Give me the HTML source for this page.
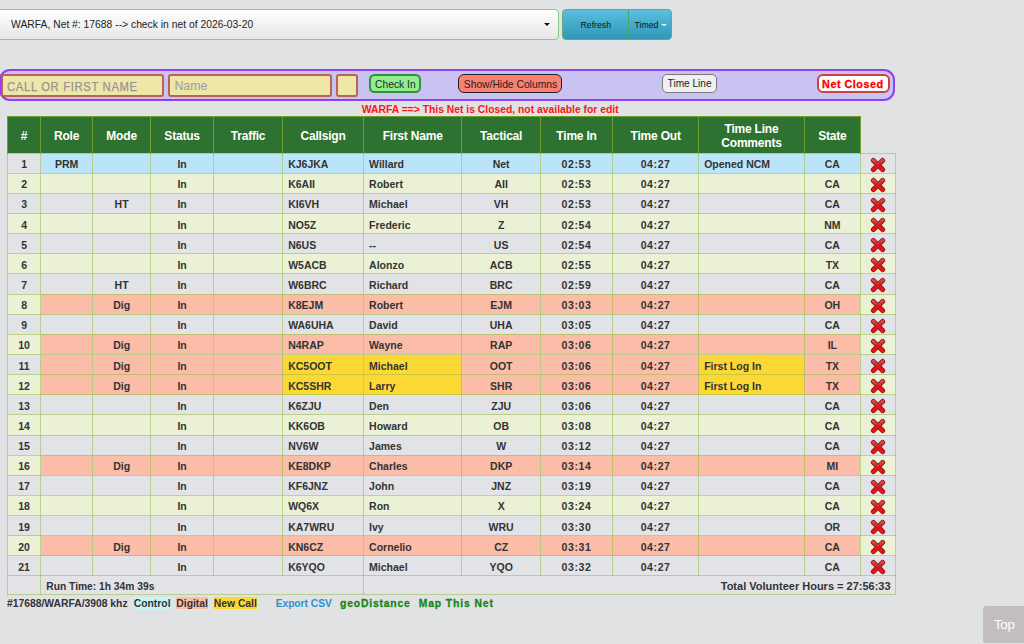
<!DOCTYPE html>
<html><head><meta charset="utf-8"><title>NCM</title>
<style>
html,body{margin:0;padding:0;}
body{width:1024px;height:644px;overflow:hidden;background:#e1e2e4;position:relative;font-family:"Liberation Sans",sans-serif;}
.a{position:absolute;box-sizing:border-box;}
.t{position:absolute;white-space:nowrap;}
.cell{position:absolute;box-sizing:border-box;display:flex;align-items:center;overflow:hidden;white-space:nowrap;font-weight:bold;font-size:10.5px;color:#333333;}
.cell.c{justify-content:center;}
.cell{padding-top:1.9px;}
.tm{letter-spacing:0.6px;}
.cell.l{justify-content:flex-start;padding-left:5.6px;}
.hd{position:absolute;box-sizing:border-box;display:flex;align-items:center;justify-content:center;text-align:center;color:#fff;font-weight:bold;font-size:12px;letter-spacing:-0.2px;line-height:14px;padding-top:2px;}
</style></head><body>
<svg width="0" height="0" style="position:absolute"><defs><linearGradient id="xg" x1="0" y1="0" x2="0" y2="1" gradientUnits="objectBoundingBox"><stop offset="0" stop-color="#d44a4a"/><stop offset="0.5" stop-color="#d01a1a"/><stop offset="1" stop-color="#f51010"/></linearGradient></defs></svg>

<div class="a" style="left:-8px;top:9.4px;width:566.5px;height:30.4px;border:1px solid #8fc98f;border-radius:4px;background:linear-gradient(#ffffff,#e6e6e6);"></div>
<div class="t" style="left:11.1px;top:18.8px;font-size:10.33px;color:#222;">WARFA, Net #: 17688 --&gt; check in net of 2026-03-20</div>
<div class="a" style="left:544px;top:22.8px;width:0;height:0;border-left:3px solid transparent;border-right:3px solid transparent;border-top:3.2px solid #111;"></div>
<div class="a" style="left:562px;top:9.4px;width:110.3px;height:30.2px;border:1px solid #5fae7a;border-radius:4px;background:linear-gradient(#5bbfdf,#2f97b7);"></div>
<div class="a" style="left:628px;top:9.8px;width:1px;height:29.4px;background:#4aa56e;"></div>
<div class="t" style="left:580.6px;top:19.8px;font-size:8.7px;color:#0c1418;">Refresh</div>
<div class="t" style="left:634.6px;top:19.8px;font-size:8.7px;color:#0c1418;">Timed</div>
<div class="a" style="left:661px;top:23.6px;width:0;height:0;border-left:3px solid transparent;border-right:3px solid transparent;border-top:2.6px solid #fff;"></div>
<div class="a" style="left:-1.5px;top:69px;width:896.5px;height:32.3px;border:2px solid #9040f0;border-radius:11px;background:#c9c3f3;"></div>
<div class="a" style="left:0.8px;top:74.2px;width:163.7px;height:22.9px;border:2px solid #bd6152;border-radius:3px;background:#efe7a8;"></div>
<div class="t" style="left:7.4px;top:79.3px;font-size:12.8px;letter-spacing:0.75px;transform:scaleX(0.88);transform-origin:0 0;-webkit-text-stroke:0.25px #949494;color:#949494;">CALL OR FIRST NAME</div>
<div class="a" style="left:168.3px;top:74.4px;width:163.6px;height:22.9px;border:2px solid #bd6152;border-radius:3px;background:#efe7a8;"></div>
<div class="t" style="left:174.4px;top:78.6px;font-size:12.4px;color:#9c9c9c;">Name</div>
<div class="a" style="left:335.7px;top:74.4px;width:22px;height:22.9px;border:2px solid #bd6152;border-radius:3px;background:#efe7a8;"></div>
<div class="a" style="left:369px;top:74.1px;width:51.7px;height:18.6px;border:2px solid #33913a;border-radius:5.5px;background:#90ee90;"></div>
<div class="t" style="left:375px;top:78.6px;font-size:10.32px;color:#1e2a1e;">Check In</div>
<div class="a" style="left:458.2px;top:74.3px;width:103.8px;height:18.6px;border:1.3px solid #222;border-radius:6px;background:#fa8072;"></div>
<div class="t" style="left:463.8px;top:78.8px;font-size:10.3px;color:#222;">Show/Hide Columns</div>
<div class="a" style="left:662.2px;top:74.2px;width:54.7px;height:18.4px;border:1.2px solid #7a7a7a;border-radius:5px;background:#f0f0f0;"></div>
<div class="t" style="left:667.6px;top:78.1px;font-size:10.1px;color:#222;">Time Line</div>
<div class="a" style="left:816.5px;top:74.1px;width:73.3px;height:18.6px;border:2px solid #d04040;border-radius:6px;background:#fff;"></div>
<div class="t" style="left:822.1px;top:78.1px;font-size:10.8px;letter-spacing:0.5px;-webkit-text-stroke:0.3px #ff0000;font-weight:bold;color:#ff0000;">Net Closed</div>
<div class="t" style="left:361.8px;top:103.9px;font-size:10.35px;font-weight:bold;color:#ff1414;">WARFA ==&gt; This Net is Closed, not available for edit</div>
<div class="a" style="left:7.5px;top:116.0px;width:852.80px;height:37.20px;background:#2e7231;"></div>
<div class="hd" style="left:7.5px;top:116.0px;width:33.20px;height:37.20px;">#</div>
<div class="hd" style="left:40.7px;top:116.0px;width:51.80px;height:37.20px;">Role</div>
<div class="hd" style="left:92.5px;top:116.0px;width:58.20px;height:37.20px;">Mode</div>
<div class="hd" style="left:150.7px;top:116.0px;width:62.80px;height:37.20px;">Status</div>
<div class="hd" style="left:213.5px;top:116.0px;width:69.10px;height:37.20px;">Traffic</div>
<div class="hd" style="left:282.6px;top:116.0px;width:80.90px;height:37.20px;">Callsign</div>
<div class="hd" style="left:363.5px;top:116.0px;width:98.30px;height:37.20px;">First Name</div>
<div class="hd" style="left:461.8px;top:116.0px;width:78.70px;height:37.20px;">Tactical</div>
<div class="hd" style="left:540.5px;top:116.0px;width:72.10px;height:37.20px;">Time In</div>
<div class="hd" style="left:612.6px;top:116.0px;width:86.00px;height:37.20px;">Time Out</div>
<div class="hd" style="left:698.6px;top:116.0px;width:105.80px;height:37.20px;">Time Line<br>Comments</div>
<div class="hd" style="left:804.4px;top:116.0px;width:55.90px;height:37.20px;">State</div>
<div class="cell c" style="left:7.5px;top:153.20px;width:33.20px;height:20.13px;background:#e2e3e6;">1</div>
<div class="cell c" style="left:40.7px;top:153.20px;width:51.80px;height:20.13px;background:#bce4f9;">PRM</div>
<div class="cell c" style="left:92.5px;top:153.20px;width:58.20px;height:20.13px;background:#bce4f9;"></div>
<div class="cell c" style="left:150.7px;top:153.20px;width:62.80px;height:20.13px;background:#bce4f9;">In</div>
<div class="cell c" style="left:213.5px;top:153.20px;width:69.10px;height:20.13px;background:#bce4f9;"></div>
<div class="cell l" style="left:282.6px;top:153.20px;width:80.90px;height:20.13px;background:#bce4f9;">KJ6JKA</div>
<div class="cell l" style="left:363.5px;top:153.20px;width:98.30px;height:20.13px;background:#bce4f9;">Willard</div>
<div class="cell c" style="left:461.8px;top:153.20px;width:78.70px;height:20.13px;background:#bce4f9;">Net</div>
<div class="cell c" style="left:540.5px;top:153.20px;width:72.10px;height:20.13px;background:#bce4f9;"><span class="tm">02:53</span></div>
<div class="cell c" style="left:612.6px;top:153.20px;width:86.00px;height:20.13px;background:#bce4f9;"><span class="tm">04:27</span></div>
<div class="cell l" style="left:698.6px;top:153.20px;width:105.80px;height:20.13px;background:#bce4f9;">Opened NCM</div>
<div class="cell c" style="left:804.4px;top:153.20px;width:55.90px;height:20.13px;background:#bce4f9;">CA</div>
<div class="cell c" style="left:860.3px;top:153.20px;width:35.30px;height:20.13px;background:#e2e3e6;"><svg width="16" height="16" viewBox="0 0 16 16" style="margin-top:1px"><g stroke-linecap="round"><path d="M3.4 3.4 L12.6 12.6 M12.6 3.4 L3.4 12.6" stroke="#8c1616" stroke-width="5.0"/><path d="M3.4 3.4 L12.6 12.6 M12.6 3.4 L3.4 12.6" stroke="url(#xg)" stroke-width="3.4"/></g></svg></div>
<div class="cell c" style="left:7.5px;top:173.33px;width:33.20px;height:20.13px;background:#ebf1d5;">2</div>
<div class="cell c" style="left:40.7px;top:173.33px;width:51.80px;height:20.13px;background:#ebf1d5;"></div>
<div class="cell c" style="left:92.5px;top:173.33px;width:58.20px;height:20.13px;background:#ebf1d5;"></div>
<div class="cell c" style="left:150.7px;top:173.33px;width:62.80px;height:20.13px;background:#ebf1d5;">In</div>
<div class="cell c" style="left:213.5px;top:173.33px;width:69.10px;height:20.13px;background:#ebf1d5;"></div>
<div class="cell l" style="left:282.6px;top:173.33px;width:80.90px;height:20.13px;background:#ebf1d5;">K6AII</div>
<div class="cell l" style="left:363.5px;top:173.33px;width:98.30px;height:20.13px;background:#ebf1d5;">Robert</div>
<div class="cell c" style="left:461.8px;top:173.33px;width:78.70px;height:20.13px;background:#ebf1d5;">AII</div>
<div class="cell c" style="left:540.5px;top:173.33px;width:72.10px;height:20.13px;background:#ebf1d5;"><span class="tm">02:53</span></div>
<div class="cell c" style="left:612.6px;top:173.33px;width:86.00px;height:20.13px;background:#ebf1d5;"><span class="tm">04:27</span></div>
<div class="cell l" style="left:698.6px;top:173.33px;width:105.80px;height:20.13px;background:#ebf1d5;"></div>
<div class="cell c" style="left:804.4px;top:173.33px;width:55.90px;height:20.13px;background:#ebf1d5;">CA</div>
<div class="cell c" style="left:860.3px;top:173.33px;width:35.30px;height:20.13px;background:#ebf1d5;"><svg width="16" height="16" viewBox="0 0 16 16" style="margin-top:1px"><g stroke-linecap="round"><path d="M3.4 3.4 L12.6 12.6 M12.6 3.4 L3.4 12.6" stroke="#8c1616" stroke-width="5.0"/><path d="M3.4 3.4 L12.6 12.6 M12.6 3.4 L3.4 12.6" stroke="url(#xg)" stroke-width="3.4"/></g></svg></div>
<div class="cell c" style="left:7.5px;top:193.46px;width:33.20px;height:20.13px;background:#e2e3e6;">3</div>
<div class="cell c" style="left:40.7px;top:193.46px;width:51.80px;height:20.13px;background:#e2e3e6;"></div>
<div class="cell c" style="left:92.5px;top:193.46px;width:58.20px;height:20.13px;background:#e2e3e6;">HT</div>
<div class="cell c" style="left:150.7px;top:193.46px;width:62.80px;height:20.13px;background:#e2e3e6;">In</div>
<div class="cell c" style="left:213.5px;top:193.46px;width:69.10px;height:20.13px;background:#e2e3e6;"></div>
<div class="cell l" style="left:282.6px;top:193.46px;width:80.90px;height:20.13px;background:#e2e3e6;">KI6VH</div>
<div class="cell l" style="left:363.5px;top:193.46px;width:98.30px;height:20.13px;background:#e2e3e6;">Michael</div>
<div class="cell c" style="left:461.8px;top:193.46px;width:78.70px;height:20.13px;background:#e2e3e6;">VH</div>
<div class="cell c" style="left:540.5px;top:193.46px;width:72.10px;height:20.13px;background:#e2e3e6;"><span class="tm">02:53</span></div>
<div class="cell c" style="left:612.6px;top:193.46px;width:86.00px;height:20.13px;background:#e2e3e6;"><span class="tm">04:27</span></div>
<div class="cell l" style="left:698.6px;top:193.46px;width:105.80px;height:20.13px;background:#e2e3e6;"></div>
<div class="cell c" style="left:804.4px;top:193.46px;width:55.90px;height:20.13px;background:#e2e3e6;">CA</div>
<div class="cell c" style="left:860.3px;top:193.46px;width:35.30px;height:20.13px;background:#e2e3e6;"><svg width="16" height="16" viewBox="0 0 16 16" style="margin-top:1px"><g stroke-linecap="round"><path d="M3.4 3.4 L12.6 12.6 M12.6 3.4 L3.4 12.6" stroke="#8c1616" stroke-width="5.0"/><path d="M3.4 3.4 L12.6 12.6 M12.6 3.4 L3.4 12.6" stroke="url(#xg)" stroke-width="3.4"/></g></svg></div>
<div class="cell c" style="left:7.5px;top:213.59px;width:33.20px;height:20.13px;background:#ebf1d5;">4</div>
<div class="cell c" style="left:40.7px;top:213.59px;width:51.80px;height:20.13px;background:#ebf1d5;"></div>
<div class="cell c" style="left:92.5px;top:213.59px;width:58.20px;height:20.13px;background:#ebf1d5;"></div>
<div class="cell c" style="left:150.7px;top:213.59px;width:62.80px;height:20.13px;background:#ebf1d5;">In</div>
<div class="cell c" style="left:213.5px;top:213.59px;width:69.10px;height:20.13px;background:#ebf1d5;"></div>
<div class="cell l" style="left:282.6px;top:213.59px;width:80.90px;height:20.13px;background:#ebf1d5;">NO5Z</div>
<div class="cell l" style="left:363.5px;top:213.59px;width:98.30px;height:20.13px;background:#ebf1d5;">Frederic</div>
<div class="cell c" style="left:461.8px;top:213.59px;width:78.70px;height:20.13px;background:#ebf1d5;">Z</div>
<div class="cell c" style="left:540.5px;top:213.59px;width:72.10px;height:20.13px;background:#ebf1d5;"><span class="tm">02:54</span></div>
<div class="cell c" style="left:612.6px;top:213.59px;width:86.00px;height:20.13px;background:#ebf1d5;"><span class="tm">04:27</span></div>
<div class="cell l" style="left:698.6px;top:213.59px;width:105.80px;height:20.13px;background:#ebf1d5;"></div>
<div class="cell c" style="left:804.4px;top:213.59px;width:55.90px;height:20.13px;background:#ebf1d5;">NM</div>
<div class="cell c" style="left:860.3px;top:213.59px;width:35.30px;height:20.13px;background:#ebf1d5;"><svg width="16" height="16" viewBox="0 0 16 16" style="margin-top:1px"><g stroke-linecap="round"><path d="M3.4 3.4 L12.6 12.6 M12.6 3.4 L3.4 12.6" stroke="#8c1616" stroke-width="5.0"/><path d="M3.4 3.4 L12.6 12.6 M12.6 3.4 L3.4 12.6" stroke="url(#xg)" stroke-width="3.4"/></g></svg></div>
<div class="cell c" style="left:7.5px;top:233.72px;width:33.20px;height:20.13px;background:#e2e3e6;">5</div>
<div class="cell c" style="left:40.7px;top:233.72px;width:51.80px;height:20.13px;background:#e2e3e6;"></div>
<div class="cell c" style="left:92.5px;top:233.72px;width:58.20px;height:20.13px;background:#e2e3e6;"></div>
<div class="cell c" style="left:150.7px;top:233.72px;width:62.80px;height:20.13px;background:#e2e3e6;">In</div>
<div class="cell c" style="left:213.5px;top:233.72px;width:69.10px;height:20.13px;background:#e2e3e6;"></div>
<div class="cell l" style="left:282.6px;top:233.72px;width:80.90px;height:20.13px;background:#e2e3e6;">N6US</div>
<div class="cell l" style="left:363.5px;top:233.72px;width:98.30px;height:20.13px;background:#e2e3e6;">--</div>
<div class="cell c" style="left:461.8px;top:233.72px;width:78.70px;height:20.13px;background:#e2e3e6;">US</div>
<div class="cell c" style="left:540.5px;top:233.72px;width:72.10px;height:20.13px;background:#e2e3e6;"><span class="tm">02:54</span></div>
<div class="cell c" style="left:612.6px;top:233.72px;width:86.00px;height:20.13px;background:#e2e3e6;"><span class="tm">04:27</span></div>
<div class="cell l" style="left:698.6px;top:233.72px;width:105.80px;height:20.13px;background:#e2e3e6;"></div>
<div class="cell c" style="left:804.4px;top:233.72px;width:55.90px;height:20.13px;background:#e2e3e6;">CA</div>
<div class="cell c" style="left:860.3px;top:233.72px;width:35.30px;height:20.13px;background:#e2e3e6;"><svg width="16" height="16" viewBox="0 0 16 16" style="margin-top:1px"><g stroke-linecap="round"><path d="M3.4 3.4 L12.6 12.6 M12.6 3.4 L3.4 12.6" stroke="#8c1616" stroke-width="5.0"/><path d="M3.4 3.4 L12.6 12.6 M12.6 3.4 L3.4 12.6" stroke="url(#xg)" stroke-width="3.4"/></g></svg></div>
<div class="cell c" style="left:7.5px;top:253.85px;width:33.20px;height:20.13px;background:#ebf1d5;">6</div>
<div class="cell c" style="left:40.7px;top:253.85px;width:51.80px;height:20.13px;background:#ebf1d5;"></div>
<div class="cell c" style="left:92.5px;top:253.85px;width:58.20px;height:20.13px;background:#ebf1d5;"></div>
<div class="cell c" style="left:150.7px;top:253.85px;width:62.80px;height:20.13px;background:#ebf1d5;">In</div>
<div class="cell c" style="left:213.5px;top:253.85px;width:69.10px;height:20.13px;background:#ebf1d5;"></div>
<div class="cell l" style="left:282.6px;top:253.85px;width:80.90px;height:20.13px;background:#ebf1d5;">W5ACB</div>
<div class="cell l" style="left:363.5px;top:253.85px;width:98.30px;height:20.13px;background:#ebf1d5;">Alonzo</div>
<div class="cell c" style="left:461.8px;top:253.85px;width:78.70px;height:20.13px;background:#ebf1d5;">ACB</div>
<div class="cell c" style="left:540.5px;top:253.85px;width:72.10px;height:20.13px;background:#ebf1d5;"><span class="tm">02:55</span></div>
<div class="cell c" style="left:612.6px;top:253.85px;width:86.00px;height:20.13px;background:#ebf1d5;"><span class="tm">04:27</span></div>
<div class="cell l" style="left:698.6px;top:253.85px;width:105.80px;height:20.13px;background:#ebf1d5;"></div>
<div class="cell c" style="left:804.4px;top:253.85px;width:55.90px;height:20.13px;background:#ebf1d5;">TX</div>
<div class="cell c" style="left:860.3px;top:253.85px;width:35.30px;height:20.13px;background:#ebf1d5;"><svg width="16" height="16" viewBox="0 0 16 16" style="margin-top:1px"><g stroke-linecap="round"><path d="M3.4 3.4 L12.6 12.6 M12.6 3.4 L3.4 12.6" stroke="#8c1616" stroke-width="5.0"/><path d="M3.4 3.4 L12.6 12.6 M12.6 3.4 L3.4 12.6" stroke="url(#xg)" stroke-width="3.4"/></g></svg></div>
<div class="cell c" style="left:7.5px;top:273.98px;width:33.20px;height:20.13px;background:#e2e3e6;">7</div>
<div class="cell c" style="left:40.7px;top:273.98px;width:51.80px;height:20.13px;background:#e2e3e6;"></div>
<div class="cell c" style="left:92.5px;top:273.98px;width:58.20px;height:20.13px;background:#e2e3e6;">HT</div>
<div class="cell c" style="left:150.7px;top:273.98px;width:62.80px;height:20.13px;background:#e2e3e6;">In</div>
<div class="cell c" style="left:213.5px;top:273.98px;width:69.10px;height:20.13px;background:#e2e3e6;"></div>
<div class="cell l" style="left:282.6px;top:273.98px;width:80.90px;height:20.13px;background:#e2e3e6;">W6BRC</div>
<div class="cell l" style="left:363.5px;top:273.98px;width:98.30px;height:20.13px;background:#e2e3e6;">Richard</div>
<div class="cell c" style="left:461.8px;top:273.98px;width:78.70px;height:20.13px;background:#e2e3e6;">BRC</div>
<div class="cell c" style="left:540.5px;top:273.98px;width:72.10px;height:20.13px;background:#e2e3e6;"><span class="tm">02:59</span></div>
<div class="cell c" style="left:612.6px;top:273.98px;width:86.00px;height:20.13px;background:#e2e3e6;"><span class="tm">04:27</span></div>
<div class="cell l" style="left:698.6px;top:273.98px;width:105.80px;height:20.13px;background:#e2e3e6;"></div>
<div class="cell c" style="left:804.4px;top:273.98px;width:55.90px;height:20.13px;background:#e2e3e6;">CA</div>
<div class="cell c" style="left:860.3px;top:273.98px;width:35.30px;height:20.13px;background:#e2e3e6;"><svg width="16" height="16" viewBox="0 0 16 16" style="margin-top:1px"><g stroke-linecap="round"><path d="M3.4 3.4 L12.6 12.6 M12.6 3.4 L3.4 12.6" stroke="#8c1616" stroke-width="5.0"/><path d="M3.4 3.4 L12.6 12.6 M12.6 3.4 L3.4 12.6" stroke="url(#xg)" stroke-width="3.4"/></g></svg></div>
<div class="cell c" style="left:7.5px;top:294.11px;width:33.20px;height:20.13px;background:#ebf1d5;">8</div>
<div class="cell c" style="left:40.7px;top:294.11px;width:51.80px;height:20.13px;background:#fbbca8;"></div>
<div class="cell c" style="left:92.5px;top:294.11px;width:58.20px;height:20.13px;background:#fbbca8;">Dig</div>
<div class="cell c" style="left:150.7px;top:294.11px;width:62.80px;height:20.13px;background:#fbbca8;">In</div>
<div class="cell c" style="left:213.5px;top:294.11px;width:69.10px;height:20.13px;background:#fbbca8;"></div>
<div class="cell l" style="left:282.6px;top:294.11px;width:80.90px;height:20.13px;background:#fbbca8;">K8EJM</div>
<div class="cell l" style="left:363.5px;top:294.11px;width:98.30px;height:20.13px;background:#fbbca8;">Robert</div>
<div class="cell c" style="left:461.8px;top:294.11px;width:78.70px;height:20.13px;background:#fbbca8;">EJM</div>
<div class="cell c" style="left:540.5px;top:294.11px;width:72.10px;height:20.13px;background:#fbbca8;"><span class="tm">03:03</span></div>
<div class="cell c" style="left:612.6px;top:294.11px;width:86.00px;height:20.13px;background:#fbbca8;"><span class="tm">04:27</span></div>
<div class="cell l" style="left:698.6px;top:294.11px;width:105.80px;height:20.13px;background:#fbbca8;"></div>
<div class="cell c" style="left:804.4px;top:294.11px;width:55.90px;height:20.13px;background:#fbbca8;">OH</div>
<div class="cell c" style="left:860.3px;top:294.11px;width:35.30px;height:20.13px;background:#ebf1d5;"><svg width="16" height="16" viewBox="0 0 16 16" style="margin-top:1px"><g stroke-linecap="round"><path d="M3.4 3.4 L12.6 12.6 M12.6 3.4 L3.4 12.6" stroke="#8c1616" stroke-width="5.0"/><path d="M3.4 3.4 L12.6 12.6 M12.6 3.4 L3.4 12.6" stroke="url(#xg)" stroke-width="3.4"/></g></svg></div>
<div class="cell c" style="left:7.5px;top:314.24px;width:33.20px;height:20.13px;background:#e2e3e6;">9</div>
<div class="cell c" style="left:40.7px;top:314.24px;width:51.80px;height:20.13px;background:#e2e3e6;"></div>
<div class="cell c" style="left:92.5px;top:314.24px;width:58.20px;height:20.13px;background:#e2e3e6;"></div>
<div class="cell c" style="left:150.7px;top:314.24px;width:62.80px;height:20.13px;background:#e2e3e6;">In</div>
<div class="cell c" style="left:213.5px;top:314.24px;width:69.10px;height:20.13px;background:#e2e3e6;"></div>
<div class="cell l" style="left:282.6px;top:314.24px;width:80.90px;height:20.13px;background:#e2e3e6;">WA6UHA</div>
<div class="cell l" style="left:363.5px;top:314.24px;width:98.30px;height:20.13px;background:#e2e3e6;">David</div>
<div class="cell c" style="left:461.8px;top:314.24px;width:78.70px;height:20.13px;background:#e2e3e6;">UHA</div>
<div class="cell c" style="left:540.5px;top:314.24px;width:72.10px;height:20.13px;background:#e2e3e6;"><span class="tm">03:05</span></div>
<div class="cell c" style="left:612.6px;top:314.24px;width:86.00px;height:20.13px;background:#e2e3e6;"><span class="tm">04:27</span></div>
<div class="cell l" style="left:698.6px;top:314.24px;width:105.80px;height:20.13px;background:#e2e3e6;"></div>
<div class="cell c" style="left:804.4px;top:314.24px;width:55.90px;height:20.13px;background:#e2e3e6;">CA</div>
<div class="cell c" style="left:860.3px;top:314.24px;width:35.30px;height:20.13px;background:#e2e3e6;"><svg width="16" height="16" viewBox="0 0 16 16" style="margin-top:1px"><g stroke-linecap="round"><path d="M3.4 3.4 L12.6 12.6 M12.6 3.4 L3.4 12.6" stroke="#8c1616" stroke-width="5.0"/><path d="M3.4 3.4 L12.6 12.6 M12.6 3.4 L3.4 12.6" stroke="url(#xg)" stroke-width="3.4"/></g></svg></div>
<div class="cell c" style="left:7.5px;top:334.37px;width:33.20px;height:20.13px;background:#ebf1d5;">10</div>
<div class="cell c" style="left:40.7px;top:334.37px;width:51.80px;height:20.13px;background:#fbbca8;"></div>
<div class="cell c" style="left:92.5px;top:334.37px;width:58.20px;height:20.13px;background:#fbbca8;">Dig</div>
<div class="cell c" style="left:150.7px;top:334.37px;width:62.80px;height:20.13px;background:#fbbca8;">In</div>
<div class="cell c" style="left:213.5px;top:334.37px;width:69.10px;height:20.13px;background:#fbbca8;"></div>
<div class="cell l" style="left:282.6px;top:334.37px;width:80.90px;height:20.13px;background:#fbbca8;">N4RAP</div>
<div class="cell l" style="left:363.5px;top:334.37px;width:98.30px;height:20.13px;background:#fbbca8;">Wayne</div>
<div class="cell c" style="left:461.8px;top:334.37px;width:78.70px;height:20.13px;background:#fbbca8;">RAP</div>
<div class="cell c" style="left:540.5px;top:334.37px;width:72.10px;height:20.13px;background:#fbbca8;"><span class="tm">03:06</span></div>
<div class="cell c" style="left:612.6px;top:334.37px;width:86.00px;height:20.13px;background:#fbbca8;"><span class="tm">04:27</span></div>
<div class="cell l" style="left:698.6px;top:334.37px;width:105.80px;height:20.13px;background:#fbbca8;"></div>
<div class="cell c" style="left:804.4px;top:334.37px;width:55.90px;height:20.13px;background:#fbbca8;">IL</div>
<div class="cell c" style="left:860.3px;top:334.37px;width:35.30px;height:20.13px;background:#ebf1d5;"><svg width="16" height="16" viewBox="0 0 16 16" style="margin-top:1px"><g stroke-linecap="round"><path d="M3.4 3.4 L12.6 12.6 M12.6 3.4 L3.4 12.6" stroke="#8c1616" stroke-width="5.0"/><path d="M3.4 3.4 L12.6 12.6 M12.6 3.4 L3.4 12.6" stroke="url(#xg)" stroke-width="3.4"/></g></svg></div>
<div class="cell c" style="left:7.5px;top:354.50px;width:33.20px;height:20.13px;background:#e2e3e6;">11</div>
<div class="cell c" style="left:40.7px;top:354.50px;width:51.80px;height:20.13px;background:#fbbca8;"></div>
<div class="cell c" style="left:92.5px;top:354.50px;width:58.20px;height:20.13px;background:#fbbca8;">Dig</div>
<div class="cell c" style="left:150.7px;top:354.50px;width:62.80px;height:20.13px;background:#fbbca8;">In</div>
<div class="cell c" style="left:213.5px;top:354.50px;width:69.10px;height:20.13px;background:#fbbca8;"></div>
<div class="cell l" style="left:282.6px;top:354.50px;width:80.90px;height:20.13px;background:#fdd835;">KC5OOT</div>
<div class="cell l" style="left:363.5px;top:354.50px;width:98.30px;height:20.13px;background:#fdd835;">Michael</div>
<div class="cell c" style="left:461.8px;top:354.50px;width:78.70px;height:20.13px;background:#fbbca8;">OOT</div>
<div class="cell c" style="left:540.5px;top:354.50px;width:72.10px;height:20.13px;background:#fbbca8;"><span class="tm">03:06</span></div>
<div class="cell c" style="left:612.6px;top:354.50px;width:86.00px;height:20.13px;background:#fbbca8;"><span class="tm">04:27</span></div>
<div class="cell l" style="left:698.6px;top:354.50px;width:105.80px;height:20.13px;background:#fdd835;">First Log In</div>
<div class="cell c" style="left:804.4px;top:354.50px;width:55.90px;height:20.13px;background:#fbbca8;">TX</div>
<div class="cell c" style="left:860.3px;top:354.50px;width:35.30px;height:20.13px;background:#e2e3e6;"><svg width="16" height="16" viewBox="0 0 16 16" style="margin-top:1px"><g stroke-linecap="round"><path d="M3.4 3.4 L12.6 12.6 M12.6 3.4 L3.4 12.6" stroke="#8c1616" stroke-width="5.0"/><path d="M3.4 3.4 L12.6 12.6 M12.6 3.4 L3.4 12.6" stroke="url(#xg)" stroke-width="3.4"/></g></svg></div>
<div class="cell c" style="left:7.5px;top:374.63px;width:33.20px;height:20.13px;background:#ebf1d5;">12</div>
<div class="cell c" style="left:40.7px;top:374.63px;width:51.80px;height:20.13px;background:#fbbca8;"></div>
<div class="cell c" style="left:92.5px;top:374.63px;width:58.20px;height:20.13px;background:#fbbca8;">Dig</div>
<div class="cell c" style="left:150.7px;top:374.63px;width:62.80px;height:20.13px;background:#fbbca8;">In</div>
<div class="cell c" style="left:213.5px;top:374.63px;width:69.10px;height:20.13px;background:#fbbca8;"></div>
<div class="cell l" style="left:282.6px;top:374.63px;width:80.90px;height:20.13px;background:#fdd835;">KC5SHR</div>
<div class="cell l" style="left:363.5px;top:374.63px;width:98.30px;height:20.13px;background:#fdd835;">Larry</div>
<div class="cell c" style="left:461.8px;top:374.63px;width:78.70px;height:20.13px;background:#fbbca8;">SHR</div>
<div class="cell c" style="left:540.5px;top:374.63px;width:72.10px;height:20.13px;background:#fbbca8;"><span class="tm">03:06</span></div>
<div class="cell c" style="left:612.6px;top:374.63px;width:86.00px;height:20.13px;background:#fbbca8;"><span class="tm">04:27</span></div>
<div class="cell l" style="left:698.6px;top:374.63px;width:105.80px;height:20.13px;background:#fdd835;">First Log In</div>
<div class="cell c" style="left:804.4px;top:374.63px;width:55.90px;height:20.13px;background:#fbbca8;">TX</div>
<div class="cell c" style="left:860.3px;top:374.63px;width:35.30px;height:20.13px;background:#ebf1d5;"><svg width="16" height="16" viewBox="0 0 16 16" style="margin-top:1px"><g stroke-linecap="round"><path d="M3.4 3.4 L12.6 12.6 M12.6 3.4 L3.4 12.6" stroke="#8c1616" stroke-width="5.0"/><path d="M3.4 3.4 L12.6 12.6 M12.6 3.4 L3.4 12.6" stroke="url(#xg)" stroke-width="3.4"/></g></svg></div>
<div class="cell c" style="left:7.5px;top:394.76px;width:33.20px;height:20.13px;background:#e2e3e6;">13</div>
<div class="cell c" style="left:40.7px;top:394.76px;width:51.80px;height:20.13px;background:#e2e3e6;"></div>
<div class="cell c" style="left:92.5px;top:394.76px;width:58.20px;height:20.13px;background:#e2e3e6;"></div>
<div class="cell c" style="left:150.7px;top:394.76px;width:62.80px;height:20.13px;background:#e2e3e6;">In</div>
<div class="cell c" style="left:213.5px;top:394.76px;width:69.10px;height:20.13px;background:#e2e3e6;"></div>
<div class="cell l" style="left:282.6px;top:394.76px;width:80.90px;height:20.13px;background:#e2e3e6;">K6ZJU</div>
<div class="cell l" style="left:363.5px;top:394.76px;width:98.30px;height:20.13px;background:#e2e3e6;">Den</div>
<div class="cell c" style="left:461.8px;top:394.76px;width:78.70px;height:20.13px;background:#e2e3e6;">ZJU</div>
<div class="cell c" style="left:540.5px;top:394.76px;width:72.10px;height:20.13px;background:#e2e3e6;"><span class="tm">03:06</span></div>
<div class="cell c" style="left:612.6px;top:394.76px;width:86.00px;height:20.13px;background:#e2e3e6;"><span class="tm">04:27</span></div>
<div class="cell l" style="left:698.6px;top:394.76px;width:105.80px;height:20.13px;background:#e2e3e6;"></div>
<div class="cell c" style="left:804.4px;top:394.76px;width:55.90px;height:20.13px;background:#e2e3e6;">CA</div>
<div class="cell c" style="left:860.3px;top:394.76px;width:35.30px;height:20.13px;background:#e2e3e6;"><svg width="16" height="16" viewBox="0 0 16 16" style="margin-top:1px"><g stroke-linecap="round"><path d="M3.4 3.4 L12.6 12.6 M12.6 3.4 L3.4 12.6" stroke="#8c1616" stroke-width="5.0"/><path d="M3.4 3.4 L12.6 12.6 M12.6 3.4 L3.4 12.6" stroke="url(#xg)" stroke-width="3.4"/></g></svg></div>
<div class="cell c" style="left:7.5px;top:414.89px;width:33.20px;height:20.13px;background:#ebf1d5;">14</div>
<div class="cell c" style="left:40.7px;top:414.89px;width:51.80px;height:20.13px;background:#ebf1d5;"></div>
<div class="cell c" style="left:92.5px;top:414.89px;width:58.20px;height:20.13px;background:#ebf1d5;"></div>
<div class="cell c" style="left:150.7px;top:414.89px;width:62.80px;height:20.13px;background:#ebf1d5;">In</div>
<div class="cell c" style="left:213.5px;top:414.89px;width:69.10px;height:20.13px;background:#ebf1d5;"></div>
<div class="cell l" style="left:282.6px;top:414.89px;width:80.90px;height:20.13px;background:#ebf1d5;">KK6OB</div>
<div class="cell l" style="left:363.5px;top:414.89px;width:98.30px;height:20.13px;background:#ebf1d5;">Howard</div>
<div class="cell c" style="left:461.8px;top:414.89px;width:78.70px;height:20.13px;background:#ebf1d5;">OB</div>
<div class="cell c" style="left:540.5px;top:414.89px;width:72.10px;height:20.13px;background:#ebf1d5;"><span class="tm">03:08</span></div>
<div class="cell c" style="left:612.6px;top:414.89px;width:86.00px;height:20.13px;background:#ebf1d5;"><span class="tm">04:27</span></div>
<div class="cell l" style="left:698.6px;top:414.89px;width:105.80px;height:20.13px;background:#ebf1d5;"></div>
<div class="cell c" style="left:804.4px;top:414.89px;width:55.90px;height:20.13px;background:#ebf1d5;">CA</div>
<div class="cell c" style="left:860.3px;top:414.89px;width:35.30px;height:20.13px;background:#ebf1d5;"><svg width="16" height="16" viewBox="0 0 16 16" style="margin-top:1px"><g stroke-linecap="round"><path d="M3.4 3.4 L12.6 12.6 M12.6 3.4 L3.4 12.6" stroke="#8c1616" stroke-width="5.0"/><path d="M3.4 3.4 L12.6 12.6 M12.6 3.4 L3.4 12.6" stroke="url(#xg)" stroke-width="3.4"/></g></svg></div>
<div class="cell c" style="left:7.5px;top:435.02px;width:33.20px;height:20.13px;background:#e2e3e6;">15</div>
<div class="cell c" style="left:40.7px;top:435.02px;width:51.80px;height:20.13px;background:#e2e3e6;"></div>
<div class="cell c" style="left:92.5px;top:435.02px;width:58.20px;height:20.13px;background:#e2e3e6;"></div>
<div class="cell c" style="left:150.7px;top:435.02px;width:62.80px;height:20.13px;background:#e2e3e6;">In</div>
<div class="cell c" style="left:213.5px;top:435.02px;width:69.10px;height:20.13px;background:#e2e3e6;"></div>
<div class="cell l" style="left:282.6px;top:435.02px;width:80.90px;height:20.13px;background:#e2e3e6;">NV6W</div>
<div class="cell l" style="left:363.5px;top:435.02px;width:98.30px;height:20.13px;background:#e2e3e6;">James</div>
<div class="cell c" style="left:461.8px;top:435.02px;width:78.70px;height:20.13px;background:#e2e3e6;">W</div>
<div class="cell c" style="left:540.5px;top:435.02px;width:72.10px;height:20.13px;background:#e2e3e6;"><span class="tm">03:12</span></div>
<div class="cell c" style="left:612.6px;top:435.02px;width:86.00px;height:20.13px;background:#e2e3e6;"><span class="tm">04:27</span></div>
<div class="cell l" style="left:698.6px;top:435.02px;width:105.80px;height:20.13px;background:#e2e3e6;"></div>
<div class="cell c" style="left:804.4px;top:435.02px;width:55.90px;height:20.13px;background:#e2e3e6;">CA</div>
<div class="cell c" style="left:860.3px;top:435.02px;width:35.30px;height:20.13px;background:#e2e3e6;"><svg width="16" height="16" viewBox="0 0 16 16" style="margin-top:1px"><g stroke-linecap="round"><path d="M3.4 3.4 L12.6 12.6 M12.6 3.4 L3.4 12.6" stroke="#8c1616" stroke-width="5.0"/><path d="M3.4 3.4 L12.6 12.6 M12.6 3.4 L3.4 12.6" stroke="url(#xg)" stroke-width="3.4"/></g></svg></div>
<div class="cell c" style="left:7.5px;top:455.15px;width:33.20px;height:20.13px;background:#ebf1d5;">16</div>
<div class="cell c" style="left:40.7px;top:455.15px;width:51.80px;height:20.13px;background:#fbbca8;"></div>
<div class="cell c" style="left:92.5px;top:455.15px;width:58.20px;height:20.13px;background:#fbbca8;">Dig</div>
<div class="cell c" style="left:150.7px;top:455.15px;width:62.80px;height:20.13px;background:#fbbca8;">In</div>
<div class="cell c" style="left:213.5px;top:455.15px;width:69.10px;height:20.13px;background:#fbbca8;"></div>
<div class="cell l" style="left:282.6px;top:455.15px;width:80.90px;height:20.13px;background:#fbbca8;">KE8DKP</div>
<div class="cell l" style="left:363.5px;top:455.15px;width:98.30px;height:20.13px;background:#fbbca8;">Charles</div>
<div class="cell c" style="left:461.8px;top:455.15px;width:78.70px;height:20.13px;background:#fbbca8;">DKP</div>
<div class="cell c" style="left:540.5px;top:455.15px;width:72.10px;height:20.13px;background:#fbbca8;"><span class="tm">03:14</span></div>
<div class="cell c" style="left:612.6px;top:455.15px;width:86.00px;height:20.13px;background:#fbbca8;"><span class="tm">04:27</span></div>
<div class="cell l" style="left:698.6px;top:455.15px;width:105.80px;height:20.13px;background:#fbbca8;"></div>
<div class="cell c" style="left:804.4px;top:455.15px;width:55.90px;height:20.13px;background:#fbbca8;">MI</div>
<div class="cell c" style="left:860.3px;top:455.15px;width:35.30px;height:20.13px;background:#ebf1d5;"><svg width="16" height="16" viewBox="0 0 16 16" style="margin-top:1px"><g stroke-linecap="round"><path d="M3.4 3.4 L12.6 12.6 M12.6 3.4 L3.4 12.6" stroke="#8c1616" stroke-width="5.0"/><path d="M3.4 3.4 L12.6 12.6 M12.6 3.4 L3.4 12.6" stroke="url(#xg)" stroke-width="3.4"/></g></svg></div>
<div class="cell c" style="left:7.5px;top:475.28px;width:33.20px;height:20.13px;background:#e2e3e6;">17</div>
<div class="cell c" style="left:40.7px;top:475.28px;width:51.80px;height:20.13px;background:#e2e3e6;"></div>
<div class="cell c" style="left:92.5px;top:475.28px;width:58.20px;height:20.13px;background:#e2e3e6;"></div>
<div class="cell c" style="left:150.7px;top:475.28px;width:62.80px;height:20.13px;background:#e2e3e6;">In</div>
<div class="cell c" style="left:213.5px;top:475.28px;width:69.10px;height:20.13px;background:#e2e3e6;"></div>
<div class="cell l" style="left:282.6px;top:475.28px;width:80.90px;height:20.13px;background:#e2e3e6;">KF6JNZ</div>
<div class="cell l" style="left:363.5px;top:475.28px;width:98.30px;height:20.13px;background:#e2e3e6;">John</div>
<div class="cell c" style="left:461.8px;top:475.28px;width:78.70px;height:20.13px;background:#e2e3e6;">JNZ</div>
<div class="cell c" style="left:540.5px;top:475.28px;width:72.10px;height:20.13px;background:#e2e3e6;"><span class="tm">03:19</span></div>
<div class="cell c" style="left:612.6px;top:475.28px;width:86.00px;height:20.13px;background:#e2e3e6;"><span class="tm">04:27</span></div>
<div class="cell l" style="left:698.6px;top:475.28px;width:105.80px;height:20.13px;background:#e2e3e6;"></div>
<div class="cell c" style="left:804.4px;top:475.28px;width:55.90px;height:20.13px;background:#e2e3e6;">CA</div>
<div class="cell c" style="left:860.3px;top:475.28px;width:35.30px;height:20.13px;background:#e2e3e6;"><svg width="16" height="16" viewBox="0 0 16 16" style="margin-top:1px"><g stroke-linecap="round"><path d="M3.4 3.4 L12.6 12.6 M12.6 3.4 L3.4 12.6" stroke="#8c1616" stroke-width="5.0"/><path d="M3.4 3.4 L12.6 12.6 M12.6 3.4 L3.4 12.6" stroke="url(#xg)" stroke-width="3.4"/></g></svg></div>
<div class="cell c" style="left:7.5px;top:495.41px;width:33.20px;height:20.13px;background:#ebf1d5;">18</div>
<div class="cell c" style="left:40.7px;top:495.41px;width:51.80px;height:20.13px;background:#ebf1d5;"></div>
<div class="cell c" style="left:92.5px;top:495.41px;width:58.20px;height:20.13px;background:#ebf1d5;"></div>
<div class="cell c" style="left:150.7px;top:495.41px;width:62.80px;height:20.13px;background:#ebf1d5;">In</div>
<div class="cell c" style="left:213.5px;top:495.41px;width:69.10px;height:20.13px;background:#ebf1d5;"></div>
<div class="cell l" style="left:282.6px;top:495.41px;width:80.90px;height:20.13px;background:#ebf1d5;">WQ6X</div>
<div class="cell l" style="left:363.5px;top:495.41px;width:98.30px;height:20.13px;background:#ebf1d5;">Ron</div>
<div class="cell c" style="left:461.8px;top:495.41px;width:78.70px;height:20.13px;background:#ebf1d5;">X</div>
<div class="cell c" style="left:540.5px;top:495.41px;width:72.10px;height:20.13px;background:#ebf1d5;"><span class="tm">03:24</span></div>
<div class="cell c" style="left:612.6px;top:495.41px;width:86.00px;height:20.13px;background:#ebf1d5;"><span class="tm">04:27</span></div>
<div class="cell l" style="left:698.6px;top:495.41px;width:105.80px;height:20.13px;background:#ebf1d5;"></div>
<div class="cell c" style="left:804.4px;top:495.41px;width:55.90px;height:20.13px;background:#ebf1d5;">CA</div>
<div class="cell c" style="left:860.3px;top:495.41px;width:35.30px;height:20.13px;background:#ebf1d5;"><svg width="16" height="16" viewBox="0 0 16 16" style="margin-top:1px"><g stroke-linecap="round"><path d="M3.4 3.4 L12.6 12.6 M12.6 3.4 L3.4 12.6" stroke="#8c1616" stroke-width="5.0"/><path d="M3.4 3.4 L12.6 12.6 M12.6 3.4 L3.4 12.6" stroke="url(#xg)" stroke-width="3.4"/></g></svg></div>
<div class="cell c" style="left:7.5px;top:515.54px;width:33.20px;height:20.13px;background:#e2e3e6;">19</div>
<div class="cell c" style="left:40.7px;top:515.54px;width:51.80px;height:20.13px;background:#e2e3e6;"></div>
<div class="cell c" style="left:92.5px;top:515.54px;width:58.20px;height:20.13px;background:#e2e3e6;"></div>
<div class="cell c" style="left:150.7px;top:515.54px;width:62.80px;height:20.13px;background:#e2e3e6;">In</div>
<div class="cell c" style="left:213.5px;top:515.54px;width:69.10px;height:20.13px;background:#e2e3e6;"></div>
<div class="cell l" style="left:282.6px;top:515.54px;width:80.90px;height:20.13px;background:#e2e3e6;">KA7WRU</div>
<div class="cell l" style="left:363.5px;top:515.54px;width:98.30px;height:20.13px;background:#e2e3e6;">Ivy</div>
<div class="cell c" style="left:461.8px;top:515.54px;width:78.70px;height:20.13px;background:#e2e3e6;">WRU</div>
<div class="cell c" style="left:540.5px;top:515.54px;width:72.10px;height:20.13px;background:#e2e3e6;"><span class="tm">03:30</span></div>
<div class="cell c" style="left:612.6px;top:515.54px;width:86.00px;height:20.13px;background:#e2e3e6;"><span class="tm">04:27</span></div>
<div class="cell l" style="left:698.6px;top:515.54px;width:105.80px;height:20.13px;background:#e2e3e6;"></div>
<div class="cell c" style="left:804.4px;top:515.54px;width:55.90px;height:20.13px;background:#e2e3e6;">OR</div>
<div class="cell c" style="left:860.3px;top:515.54px;width:35.30px;height:20.13px;background:#e2e3e6;"><svg width="16" height="16" viewBox="0 0 16 16" style="margin-top:1px"><g stroke-linecap="round"><path d="M3.4 3.4 L12.6 12.6 M12.6 3.4 L3.4 12.6" stroke="#8c1616" stroke-width="5.0"/><path d="M3.4 3.4 L12.6 12.6 M12.6 3.4 L3.4 12.6" stroke="url(#xg)" stroke-width="3.4"/></g></svg></div>
<div class="cell c" style="left:7.5px;top:535.67px;width:33.20px;height:20.13px;background:#ebf1d5;">20</div>
<div class="cell c" style="left:40.7px;top:535.67px;width:51.80px;height:20.13px;background:#fbbca8;"></div>
<div class="cell c" style="left:92.5px;top:535.67px;width:58.20px;height:20.13px;background:#fbbca8;">Dig</div>
<div class="cell c" style="left:150.7px;top:535.67px;width:62.80px;height:20.13px;background:#fbbca8;">In</div>
<div class="cell c" style="left:213.5px;top:535.67px;width:69.10px;height:20.13px;background:#fbbca8;"></div>
<div class="cell l" style="left:282.6px;top:535.67px;width:80.90px;height:20.13px;background:#fbbca8;">KN6CZ</div>
<div class="cell l" style="left:363.5px;top:535.67px;width:98.30px;height:20.13px;background:#fbbca8;">Cornelio</div>
<div class="cell c" style="left:461.8px;top:535.67px;width:78.70px;height:20.13px;background:#fbbca8;">CZ</div>
<div class="cell c" style="left:540.5px;top:535.67px;width:72.10px;height:20.13px;background:#fbbca8;"><span class="tm">03:31</span></div>
<div class="cell c" style="left:612.6px;top:535.67px;width:86.00px;height:20.13px;background:#fbbca8;"><span class="tm">04:27</span></div>
<div class="cell l" style="left:698.6px;top:535.67px;width:105.80px;height:20.13px;background:#fbbca8;"></div>
<div class="cell c" style="left:804.4px;top:535.67px;width:55.90px;height:20.13px;background:#fbbca8;">CA</div>
<div class="cell c" style="left:860.3px;top:535.67px;width:35.30px;height:20.13px;background:#ebf1d5;"><svg width="16" height="16" viewBox="0 0 16 16" style="margin-top:1px"><g stroke-linecap="round"><path d="M3.4 3.4 L12.6 12.6 M12.6 3.4 L3.4 12.6" stroke="#8c1616" stroke-width="5.0"/><path d="M3.4 3.4 L12.6 12.6 M12.6 3.4 L3.4 12.6" stroke="url(#xg)" stroke-width="3.4"/></g></svg></div>
<div class="cell c" style="left:7.5px;top:555.80px;width:33.20px;height:20.13px;background:#e2e3e6;">21</div>
<div class="cell c" style="left:40.7px;top:555.80px;width:51.80px;height:20.13px;background:#e2e3e6;"></div>
<div class="cell c" style="left:92.5px;top:555.80px;width:58.20px;height:20.13px;background:#e2e3e6;"></div>
<div class="cell c" style="left:150.7px;top:555.80px;width:62.80px;height:20.13px;background:#e2e3e6;">In</div>
<div class="cell c" style="left:213.5px;top:555.80px;width:69.10px;height:20.13px;background:#e2e3e6;"></div>
<div class="cell l" style="left:282.6px;top:555.80px;width:80.90px;height:20.13px;background:#e2e3e6;">K6YQO</div>
<div class="cell l" style="left:363.5px;top:555.80px;width:98.30px;height:20.13px;background:#e2e3e6;">Michael</div>
<div class="cell c" style="left:461.8px;top:555.80px;width:78.70px;height:20.13px;background:#e2e3e6;">YQO</div>
<div class="cell c" style="left:540.5px;top:555.80px;width:72.10px;height:20.13px;background:#e2e3e6;"><span class="tm">03:32</span></div>
<div class="cell c" style="left:612.6px;top:555.80px;width:86.00px;height:20.13px;background:#e2e3e6;"><span class="tm">04:27</span></div>
<div class="cell l" style="left:698.6px;top:555.80px;width:105.80px;height:20.13px;background:#e2e3e6;"></div>
<div class="cell c" style="left:804.4px;top:555.80px;width:55.90px;height:20.13px;background:#e2e3e6;">CA</div>
<div class="cell c" style="left:860.3px;top:555.80px;width:35.30px;height:20.13px;background:#e2e3e6;"><svg width="16" height="16" viewBox="0 0 16 16" style="margin-top:1px"><g stroke-linecap="round"><path d="M3.4 3.4 L12.6 12.6 M12.6 3.4 L3.4 12.6" stroke="#8c1616" stroke-width="5.0"/><path d="M3.4 3.4 L12.6 12.6 M12.6 3.4 L3.4 12.6" stroke="url(#xg)" stroke-width="3.4"/></g></svg></div>
<div class="cell l" style="left:7.5px;top:575.93px;width:888.10px;height:18.67px;background:#e2e3e6;"></div>
<div class="cell l" style="left:40.7px;top:575.93px;width:322.80px;height:18.67px;font-size:10.25px;">Run Time: 1h 34m 39s</div>
<div class="cell" style="left:363.5px;top:575.93px;width:532.10px;height:18.67px;justify-content:flex-end;padding-right:5px;font-size:11px;">Total Volunteer Hours = 27:56:33</div>
<div class="a" style="left:7.00px;top:152.70px;width:889.10px;height:1px;background:rgba(150,190,70,0.55);"></div>
<div class="a" style="left:7.00px;top:172.83px;width:889.10px;height:1px;background:rgba(150,190,70,0.55);"></div>
<div class="a" style="left:7.00px;top:192.96px;width:889.10px;height:1px;background:rgba(150,190,70,0.55);"></div>
<div class="a" style="left:7.00px;top:213.09px;width:889.10px;height:1px;background:rgba(150,190,70,0.55);"></div>
<div class="a" style="left:7.00px;top:233.22px;width:889.10px;height:1px;background:rgba(150,190,70,0.55);"></div>
<div class="a" style="left:7.00px;top:253.35px;width:889.10px;height:1px;background:rgba(150,190,70,0.55);"></div>
<div class="a" style="left:7.00px;top:273.48px;width:889.10px;height:1px;background:rgba(150,190,70,0.55);"></div>
<div class="a" style="left:7.00px;top:293.61px;width:889.10px;height:1px;background:rgba(150,190,70,0.55);"></div>
<div class="a" style="left:7.00px;top:313.74px;width:889.10px;height:1px;background:rgba(150,190,70,0.55);"></div>
<div class="a" style="left:7.00px;top:333.87px;width:889.10px;height:1px;background:rgba(150,190,70,0.55);"></div>
<div class="a" style="left:7.00px;top:354.00px;width:889.10px;height:1px;background:rgba(150,190,70,0.55);"></div>
<div class="a" style="left:7.00px;top:374.13px;width:889.10px;height:1px;background:rgba(150,190,70,0.55);"></div>
<div class="a" style="left:7.00px;top:394.26px;width:889.10px;height:1px;background:rgba(150,190,70,0.55);"></div>
<div class="a" style="left:7.00px;top:414.39px;width:889.10px;height:1px;background:rgba(150,190,70,0.55);"></div>
<div class="a" style="left:7.00px;top:434.52px;width:889.10px;height:1px;background:rgba(150,190,70,0.55);"></div>
<div class="a" style="left:7.00px;top:454.65px;width:889.10px;height:1px;background:rgba(150,190,70,0.55);"></div>
<div class="a" style="left:7.00px;top:474.78px;width:889.10px;height:1px;background:rgba(150,190,70,0.55);"></div>
<div class="a" style="left:7.00px;top:494.91px;width:889.10px;height:1px;background:rgba(150,190,70,0.55);"></div>
<div class="a" style="left:7.00px;top:515.04px;width:889.10px;height:1px;background:rgba(150,190,70,0.55);"></div>
<div class="a" style="left:7.00px;top:535.17px;width:889.10px;height:1px;background:rgba(150,190,70,0.55);"></div>
<div class="a" style="left:7.00px;top:555.30px;width:889.10px;height:1px;background:rgba(150,190,70,0.55);"></div>
<div class="a" style="left:7.00px;top:575.43px;width:889.10px;height:1px;background:rgba(150,190,70,0.55);"></div>
<div class="a" style="left:7.00px;top:594.10px;width:889.10px;height:1px;background:rgba(150,190,70,0.55);"></div>
<div class="a" style="left:7.00px;top:152.70px;width:1px;height:423.73px;background:rgba(150,190,70,0.55);"></div>
<div class="a" style="left:40.20px;top:152.70px;width:1px;height:423.73px;background:rgba(150,190,70,0.55);"></div>
<div class="a" style="left:92.00px;top:152.70px;width:1px;height:423.73px;background:rgba(150,190,70,0.55);"></div>
<div class="a" style="left:150.20px;top:152.70px;width:1px;height:423.73px;background:rgba(150,190,70,0.55);"></div>
<div class="a" style="left:213.00px;top:152.70px;width:1px;height:423.73px;background:rgba(150,190,70,0.55);"></div>
<div class="a" style="left:282.10px;top:152.70px;width:1px;height:423.73px;background:rgba(150,190,70,0.55);"></div>
<div class="a" style="left:363.00px;top:152.70px;width:1px;height:423.73px;background:rgba(150,190,70,0.55);"></div>
<div class="a" style="left:461.30px;top:152.70px;width:1px;height:423.73px;background:rgba(150,190,70,0.55);"></div>
<div class="a" style="left:540.00px;top:152.70px;width:1px;height:423.73px;background:rgba(150,190,70,0.55);"></div>
<div class="a" style="left:612.10px;top:152.70px;width:1px;height:423.73px;background:rgba(150,190,70,0.55);"></div>
<div class="a" style="left:698.10px;top:152.70px;width:1px;height:423.73px;background:rgba(150,190,70,0.55);"></div>
<div class="a" style="left:803.90px;top:152.70px;width:1px;height:423.73px;background:rgba(150,190,70,0.55);"></div>
<div class="a" style="left:859.80px;top:152.70px;width:1px;height:423.73px;background:rgba(150,190,70,0.55);"></div>
<div class="a" style="left:895.10px;top:152.70px;width:1px;height:423.73px;background:rgba(150,190,70,0.55);"></div>
<div class="a" style="left:7.00px;top:575.43px;width:1px;height:19.67px;background:rgba(150,190,70,0.55);"></div>
<div class="a" style="left:40.20px;top:575.43px;width:1px;height:19.67px;background:rgba(150,190,70,0.55);"></div>
<div class="a" style="left:363.00px;top:575.43px;width:1px;height:19.67px;background:rgba(150,190,70,0.55);"></div>
<div class="a" style="left:895.10px;top:575.43px;width:1px;height:19.67px;background:rgba(150,190,70,0.55);"></div>
<div class="a" style="left:7.00px;top:115.50px;width:1px;height:38.20px;background:#6f9f2c;"></div>
<div class="a" style="left:40.20px;top:115.50px;width:1px;height:38.20px;background:#6f9f2c;"></div>
<div class="a" style="left:92.00px;top:115.50px;width:1px;height:38.20px;background:#6f9f2c;"></div>
<div class="a" style="left:150.20px;top:115.50px;width:1px;height:38.20px;background:#6f9f2c;"></div>
<div class="a" style="left:213.00px;top:115.50px;width:1px;height:38.20px;background:#6f9f2c;"></div>
<div class="a" style="left:282.10px;top:115.50px;width:1px;height:38.20px;background:#6f9f2c;"></div>
<div class="a" style="left:363.00px;top:115.50px;width:1px;height:38.20px;background:#6f9f2c;"></div>
<div class="a" style="left:461.30px;top:115.50px;width:1px;height:38.20px;background:#6f9f2c;"></div>
<div class="a" style="left:540.00px;top:115.50px;width:1px;height:38.20px;background:#6f9f2c;"></div>
<div class="a" style="left:612.10px;top:115.50px;width:1px;height:38.20px;background:#6f9f2c;"></div>
<div class="a" style="left:698.10px;top:115.50px;width:1px;height:38.20px;background:#6f9f2c;"></div>
<div class="a" style="left:803.90px;top:115.50px;width:1px;height:38.20px;background:#6f9f2c;"></div>
<div class="a" style="left:859.80px;top:115.50px;width:1px;height:38.20px;background:#6f9f2c;"></div>
<div class="a" style="left:7.00px;top:115.50px;width:853.80px;height:1px;background:#6f9f2c;"></div>
<div class="t" style="left:7px;top:597.5px;font-size:10.33px;font-weight:bold;color:#333;">#17688/WARFA/3908 khz</div>
<div class="a" style="left:133.8px;top:597px;width:37.0px;height:11.7px;background:#c4f7f7;"></div>
<div class="t" style="left:133.8px;top:597.5px;font-size:10.33px;font-weight:bold;color:#333;">Control</div>
<div class="a" style="left:176.3px;top:597px;width:31.7px;height:11.7px;background:#fbbca8;"></div>
<div class="t" style="left:176.3px;top:597.5px;font-size:10.33px;font-weight:bold;color:#333;">Digital</div>
<div class="a" style="left:213.8px;top:597px;width:43.2px;height:11.7px;background:#fdd835;"></div>
<div class="t" style="left:213.8px;top:597.5px;font-size:10.33px;font-weight:bold;color:#333;">New Call</div>
<div class="t" style="left:275.7px;top:597.5px;font-size:10.2px;font-weight:bold;color:#2b8fd6;">Export CSV</div>
<div class="t" style="left:340px;top:597.5px;font-size:10.33px;letter-spacing:0.84px;-webkit-text-stroke:0.3px #168816;font-weight:bold;color:#168816;">geoDistance</div>
<div class="t" style="left:418.7px;top:597.5px;font-size:10.33px;letter-spacing:0.9px;-webkit-text-stroke:0.3px #168816;font-weight:bold;color:#168816;">Map This Net</div>
<div class="a" style="left:982.6px;top:605.9px;width:50px;height:36.8px;border-radius:3px;background:#c2bebf;"></div>
<div class="t" style="left:994px;top:617px;font-size:13.3px;letter-spacing:-0.3px;color:#fff;">Top</div>
</body></html>
